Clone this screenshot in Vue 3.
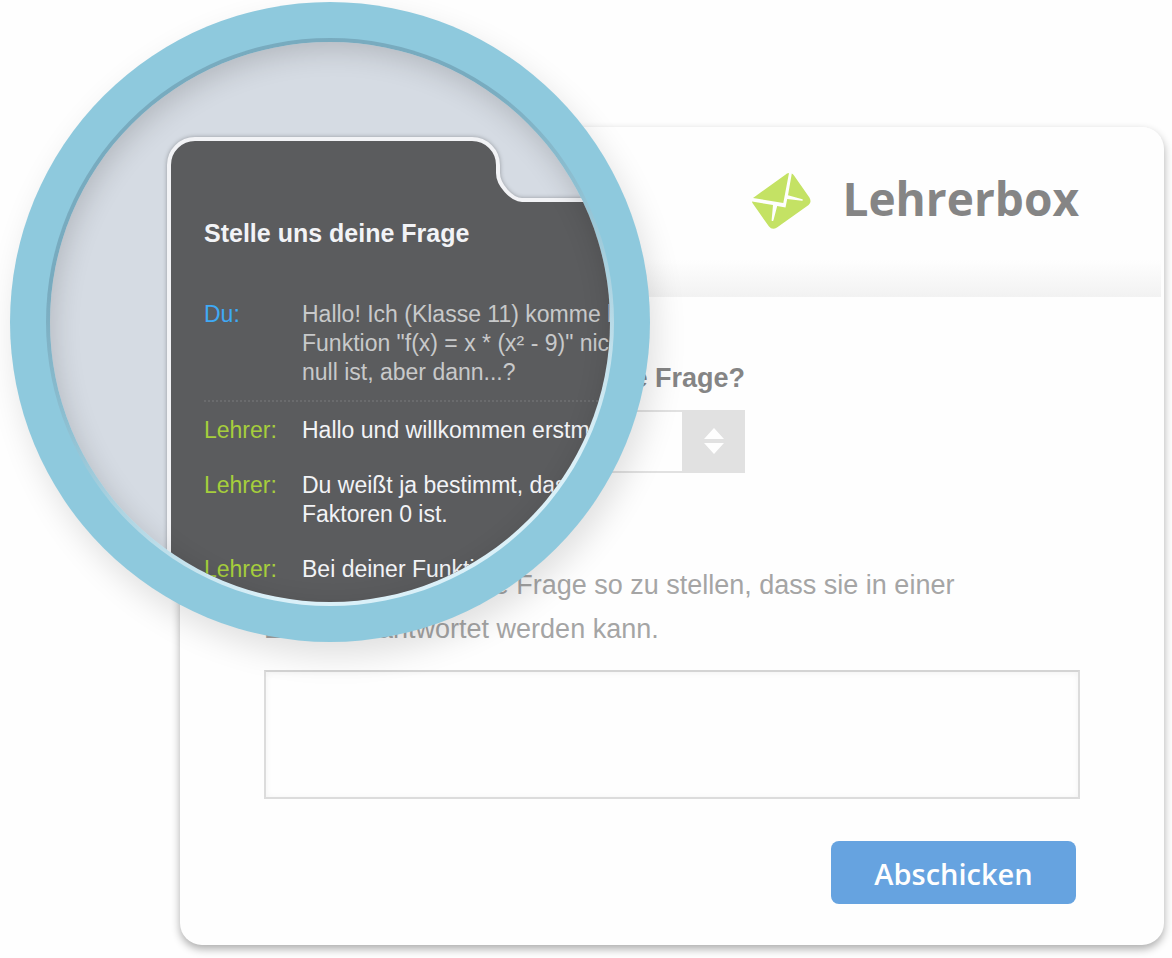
<script setup>
import { ref } from 'vue'

const subject = ref('Mathe')
const subjects = ['Mathe', 'Physik', 'Chemie']
const question = ref('')

const messages = [
  {
    from: 'Du',
    own: true,
    lines: ['Hallo! Ich (Klasse 11) komme bei der', 'Funktion "f(x) = x * (x² - 9)" nicht weiter', 'null ist, aber dann...?'],
  },
  { from: 'Lehrer', lines: ['Hallo und willkommen erstmal!'] },
  { from: 'Lehrer', lines: ['Du weißt ja bestimmt, dass einer der', 'Faktoren 0 ist.'] },
  { from: 'Lehrer', lines: ['Bei deiner Funktion'] },
]
</script>

<template>
  <main class="page">
    <form class="card" @submit.prevent>
      <header class="card-head">
        <svg class="logo" viewBox="0 0 60 58" aria-hidden="true">
          <path d="M1 25 L33 2 Q35 0 37 0 L31.3 30 Z" />
          <path d="M0 28.6 L21 32 L19.6 47.4 Q20.5 48.8 21.4 47.4 L25.2 33 L33.5 34.4 L35.2 26 L50 27.8 Q51.6 27.4 50.4 26.2 L36 22.3 L39.8 0.6 Q41 1 42 2.4 L57.4 24.6 Q60 29.2 56.6 32 L25 54.4 Q20.4 57.6 17 53.6 L0.8 30.6 Q0 29.6 0 28.6 Z" />
        </svg>
        <h1>Lehrerbox</h1>
      </header>
      <div class="card-body">
        <label class="subject-label" for="subject">In welchem Fach hast du eine Frage?</label>
        <div class="select-box">
          <select id="subject" v-model="subject">
            <option v-for="s in subjects" :key="s">{{ s }}</option>
          </select>
          <span class="arrows" aria-hidden="true">
            <svg viewBox="0 0 20 26"><path d="M10 0 L20 11 H0 Z M0 15 H20 L10 26 Z" /></svg>
          </span>
        </div>
        <label class="hint" for="question">Versuche bitte deine Frage so zu stellen, dass sie in einer<br />E-Mail beantwortet werden kann.</label>
        <textarea id="question" v-model="question"></textarea>
        <button type="submit">Abschicken</button>
      </div>
    </form>

    <section class="lens" aria-label="Stelle uns deine Frage">
      <div class="lens-rim">
        <div class="lens-view">
          <svg class="panel" viewBox="0 0 560 560" aria-hidden="true">
            <path d="M119 620 V123 A26 26 0 0 1 145 97 H422 A26 26 0 0 1 448 123 V131 C448 143 462 158 472 158 H620 V620 Z" />
          </svg>
          <div class="chat">
            <h2>Stelle uns deine Frage</h2>
            <dl>
              <div v-for="(m, i) in messages" :key="i" class="message" :class="{ own: m.own }">
                <dt>{{ m.from }}:</dt>
                <dd><span v-for="line in m.lines" :key="line">{{ line }}</span></dd>
              </div>
            </dl>
          </div>
        </div>
      </div>
    </section>
  </main>
</template>

<style>
body {
  margin: 0;
  background: #fefefe;
}
</style>

<style scoped>
* {
  box-sizing: border-box;
}
.page {
  position: relative;
  padding: 127px 8px 13px 180px;
  font-family: "Liberation Sans", Arial, sans-serif;
}
.card {
  border-radius: 22px;
  background: #fefefe;
  box-shadow: 0 4px 8px rgba(0, 0, 0, 0.32);
  overflow: hidden;
}
.card-head {
  display: flex;
  justify-content: flex-end;
  align-items: center;
  gap: 30px;
  height: 170px;
  margin-right: 3px;
  padding: 0 82px 28px;
  background: linear-gradient(to bottom, #fefefe 78%, #f2f2f2);
}
.logo {
  width: 60px;
  height: 58px;
  margin-top: 8px;
  fill: #c4e264;
}
h1 {
  margin: 0;
  font: bold 46px/60px "Open Sans", "Noto Sans", sans-serif;
  color: #858585;
}
.card-body {
  display: flex;
  flex-direction: column;
  align-items: flex-start;
  padding: 65px 84px 41px;
}
.subject-label {
  font-size: 27px;
  font-weight: bold;
  line-height: 32px;
  color: #858585;
  width: 481px;
  text-align: right;
}
.select-box {
  position: relative;
  width: 481px;
  margin-top: 16px;
}
select {
  display: block;
  width: 100%;
  height: 63px;
  padding: 0 80px 0 20px;
  border: 2px solid #e1e1e1;
  border-radius: 0;
  background: #fefefe;
  font: 27px "Liberation Sans", Arial, sans-serif;
  color: #a5a5a5;
  appearance: none;
}
.arrows {
  position: absolute;
  top: 0;
  right: 0;
  bottom: 0;
  width: 63px;
  padding-bottom: 2px;
  display: grid;
  place-items: center;
  background: #e1e1e1;
  pointer-events: none;
}
.arrows svg {
  width: 20px;
  height: 26px;
  fill: #fefefe;
}
.hint {
  margin-top: 90px;
  font-size: 27px;
  line-height: 44px;
  color: #a5a5a5;
}
textarea {
  width: 100%;
  height: 129px;
  margin-top: 19px;
  padding: 12px;
  border: 2px solid #dcdcdc;
  border-top-color: #d4d4d4;
  border-radius: 0;
  background: #fefefe;
  box-shadow: inset 0 1px 6px rgba(0, 0, 0, 0.05);
  font: 27px/32px "Liberation Sans", Arial, sans-serif;
  color: #858585;
  resize: none;
}
button {
  align-self: flex-end;
  min-width: 245px;
  height: 63px;
  margin: 42px 4px 0 0;
  padding: 3px 40px 0;
  border: 0;
  border-radius: 8px;
  background: #66a3e0;
  color: #fefefe;
  font: 600 29px/40px "Open Sans", "Noto Sans", sans-serif;
}
.lens {
  position: absolute;
  top: 2px;
  left: 10px;
  padding: 36px;
  border-radius: 50%;
  background: #8ec9dd;
  box-shadow: 6px 14px 32px rgba(0, 0, 0, 0.12);
}
.lens-rim {
  padding: 4px;
  border-radius: 50%;
  background: linear-gradient(155deg, #78abbf 30%, #8ec0d2 48%, #daf0f8 80%);
}
.lens-view {
  position: relative;
  width: 560px;
  height: 560px;
  border-radius: 50%;
  background: #d5dbe3;
  overflow: hidden;
}
.lens-view::after {
  content: "";
  position: absolute;
  inset: 0;
  border-radius: 50%;
  box-shadow: inset 3px 8px 28px rgba(0, 0, 0, 0.16);
}
.panel {
  position: absolute;
  inset: 0;
  fill: #5b5c5e;
  stroke: #f2f3f6;
  stroke-width: 4;
  filter: drop-shadow(0 0 2px rgba(0, 0, 0, 0.3));
}
.chat {
  position: relative;
  padding: 176px 0 0 154px;
  white-space: nowrap;
}
h2 {
  margin: 0;
  font-size: 25px;
  line-height: 30px;
  color: #f2f3f6;
}
dl {
  display: flex;
  flex-direction: column;
  gap: 26px;
  margin: 52px 0 0;
  font-size: 23px;
  line-height: 29px;
}
.message {
  display: grid;
  grid-template-columns: 98px 1fr;
}
.own {
  margin-bottom: -12px;
  padding-bottom: 13px;
  border-bottom: 2px dotted #6a6b6d;
}
dt {
  color: #a6ce3c;
}
dd {
  margin: 0;
  color: #f2f3f6;
}
dd span {
  display: block;
}
.own dt {
  color: #3fa9f5;
}
.own dd {
  color: #c8c9ca;
}
</style>
